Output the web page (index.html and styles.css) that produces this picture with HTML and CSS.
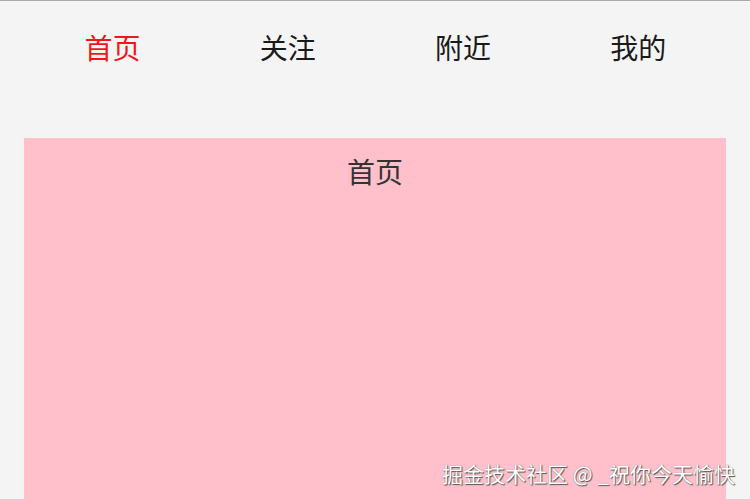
FILE: index.html
```html
<!DOCTYPE html>
<html lang="zh">
<head>
<meta charset="utf-8">
<link rel="stylesheet" href="styles.css">
</head>
<body>
<div class="page">
  <nav class="tabs">
    <div class="tab active">首页</div>
    <div class="tab">关注</div>
    <div class="tab">附近</div>
    <div class="tab">我的</div>
  </nav>
  <main class="panel">
    <div class="panel-title">首页</div>
  </main>
</div>
<div class="watermark">掘金技术社区 @ _祝你今天愉快</div>
</body>
</html>
```
FILE: styles.css
```css
html, body {
  margin: 0;
  padding: 0;
  height: 100%;
  overflow: hidden;
}
body {
  background: #f4f4f4;
  border-top: 1px solid #a9a9a9;
  font-family: "Noto Sans CJK SC", "Noto Sans", sans-serif;
  box-sizing: border-box;
}
.page {
  padding: 0 24px;
  display: flex;
  flex-direction: column;
  height: 100%;
}
.tabs {
  display: grid;
  grid-template-columns: repeat(4, 1fr);
  padding-top: 25px;
  margin-left: 1px;
}
.tab {
  text-align: center;
  font-size: 28px;
  line-height: 42px;
  color: #1a1a1a;
}
.tab.active {
  color: #f2161b;
}
.panel {
  margin-top: 70px;
  flex: 1;
  background: #ffc0cb;
  padding-top: 12px;
}
.panel-title {
  text-align: center;
  font-size: 28px;
  line-height: 42px;
  color: #333;
}
.watermark {
  position: absolute;
  right: 15px;
  bottom: 12px;
  font-size: 21px;
  line-height: 28px;
  color: #fff;
  text-shadow: 1px 1px 1px #555, 0 0 1px #777;
}
```
